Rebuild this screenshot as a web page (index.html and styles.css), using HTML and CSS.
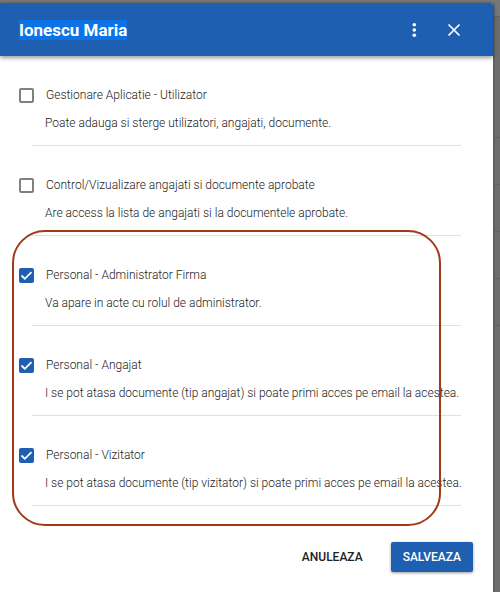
FILE: index.html
```html
<!DOCTYPE html>
<html lang="ro">
<head>
<meta charset="utf-8">
<meta name="viewport" content="width=device-width, initial-scale=1">
<title>Ionescu Maria</title>
<link rel="stylesheet" href="styles.css">
</head>
<body>
<div class="backdrop" aria-hidden="true">
  <div class="row row-top"></div>
  <div class="row row-head"></div>
  <div class="row"></div>
  <div class="row"></div>
  <div class="row"></div>
  <div class="row"></div>
</div>
<main class="dialog" role="dialog" aria-labelledby="title">
  <header class="bar">
    <h1 class="title" id="title"><span class="selected">Ionescu Maria</span></h1>
    <button class="icon-button" type="button" aria-label="Optiuni">
      <svg viewBox="0 0 20 20" width="20" height="20" fill="currentColor"><circle cx="10.3" cy="4.8" r="1.8"/><circle cx="10.3" cy="10" r="1.8"/><circle cx="10.3" cy="15.2" r="1.8"/></svg>
    </button>
    <button class="icon-button" type="button" aria-label="Inchide">
      <svg viewBox="0 0 20 20" width="20" height="20" fill="none" stroke="currentColor" stroke-width="1.7"><path d="M4.5 4.5l11 11M15.5 4.5l-11 11"/></svg>
    </button>
  </header>
  <form>
    <section class="role">
      <label class="name"><input class="check" type="checkbox" aria-describedby="d1">Gestionare Aplicatie - Utilizator</label>
      <p class="description" id="d1">Poate adauga si sterge utilizatori, angajati, documente.</p>
    </section>
    <section class="role">
      <label class="name"><input class="check" type="checkbox" aria-describedby="d2">Control/Vizualizare angajati si documente aprobate</label>
      <p class="description" id="d2">Are access la lista de angajati si la documentele aprobate.</p>
    </section>
    <div class="highlighted">
      <section class="role">
        <label class="name"><input class="check" type="checkbox" aria-describedby="d3" checked>Personal - Administrator Firma</label>
        <p class="description" id="d3">Va apare in acte cu rolul de administrator.</p>
      </section>
      <section class="role">
        <label class="name"><input class="check" type="checkbox" aria-describedby="d4" checked>Personal - Angajat</label>
        <p class="description" id="d4">I se pot atasa documente (tip angajat) si poate primi acces pe email la acestea.</p>
      </section>
      <section class="role">
        <label class="name"><input class="check" type="checkbox" aria-describedby="d5" checked>Personal - Vizitator</label>
        <p class="description" id="d5">I se pot atasa documente (tip vizitator) si poate primi acces pe email la acestea.</p>
      </section>
    </div>
    <footer class="actions">
      <button class="button" type="button">ANULEAZA</button>
      <button class="button primary" type="submit">SALVEAZA</button>
    </footer>
  </form>
</main>
</body>
</html>
```
FILE: styles.css
```css
* {
  box-sizing: border-box;
}

body {
  margin: 0;
  min-height: 100vh;
  display: flex;
  background: #6d6d6d;
  color: #222;
  font: 300 12px/20px Roboto, sans-serif;
}

.backdrop {
  position: absolute;
  inset: 0;
  overflow: hidden;
}

.row {
  height: 47px;
  border-bottom: 1px solid #616161;
}

.row-top {
  height: 17px;
  background: #777;
}

.row-head {
  height: 121px;
}

.dialog {
  position: relative;
  flex: 1;
  min-width: 0;
  margin: 3px 7px 0 0;
  background: #fff;
  border-radius: 0 2px 0 0;
  box-shadow: 1px 0 2px #555;
}

.bar {
  position: relative;
  display: flex;
  align-items: center;
  gap: 20px;
  height: 53px;
  padding: 0 29px 0 19px;
  border-radius: 0 2px 0 0;
  background: #1e5fb1;
  color: #fff;
  box-shadow: 0 2px 4px rgba(0, 0, 0, 0.4);
}

.title {
  flex: 1;
  margin: 0;
  font-size: 17px;
  font-weight: 700;
  line-height: 20px;
}

.selected {
  display: inline-block;
  background: #0b72e7;
}

.icon-button {
  display: flex;
  width: 20px;
  height: 20px;
  padding: 0;
  border: 0;
  background: none;
  color: inherit;
}

.role {
  position: relative;
  padding: 29px 32px 13px 19px;
}

.role::after {
  content: "";
  display: block;
  position: absolute;
  inset: auto 32px 0 32px;
  border-bottom: 1px solid #e0e0e0;
}

.name {
  display: flex;
  align-items: center;
  gap: 12px;
}

.check {
  appearance: none;
  flex: none;
  width: 15px;
  height: 15px;
  margin: 0;
  border: 2px solid #808080;
  border-radius: 2px;
}

.check:checked {
  border: 0;
  background: #1e5fb1 url("data:image/svg+xml,%3Csvg xmlns='http://www.w3.org/2000/svg' viewBox='0 0 15 15'%3E%3Cpath d='M2.5 7.5l3.3 3.3 6.7-6.7' fill='none' stroke='white' stroke-width='1.8'/%3E%3C/svg%3E");
}

.description {
  margin: 8px 0 0 26px;
  white-space: nowrap;
}

.highlighted {
  position: relative;
}

.highlighted::after {
  content: "";
  position: absolute;
  inset: -6px 52px -20px 12px;
  border: 2px solid #a13a18;
  border-radius: 33px;
  pointer-events: none;
}

.actions {
  display: flex;
  justify-content: flex-end;
  gap: 16px;
  padding: 36px 20px 20px;
}

.button {
  height: 30px;
  padding: 0 12px;
  border: 0;
  border-radius: 2px;
  background: none;
  color: #222;
  font: 500 12px/20px Roboto, sans-serif;
}

.primary {
  background: #1e5fb1;
  color: #fff;
  box-shadow: 0 1px 3px rgba(0, 0, 0, 0.4);
}
```
